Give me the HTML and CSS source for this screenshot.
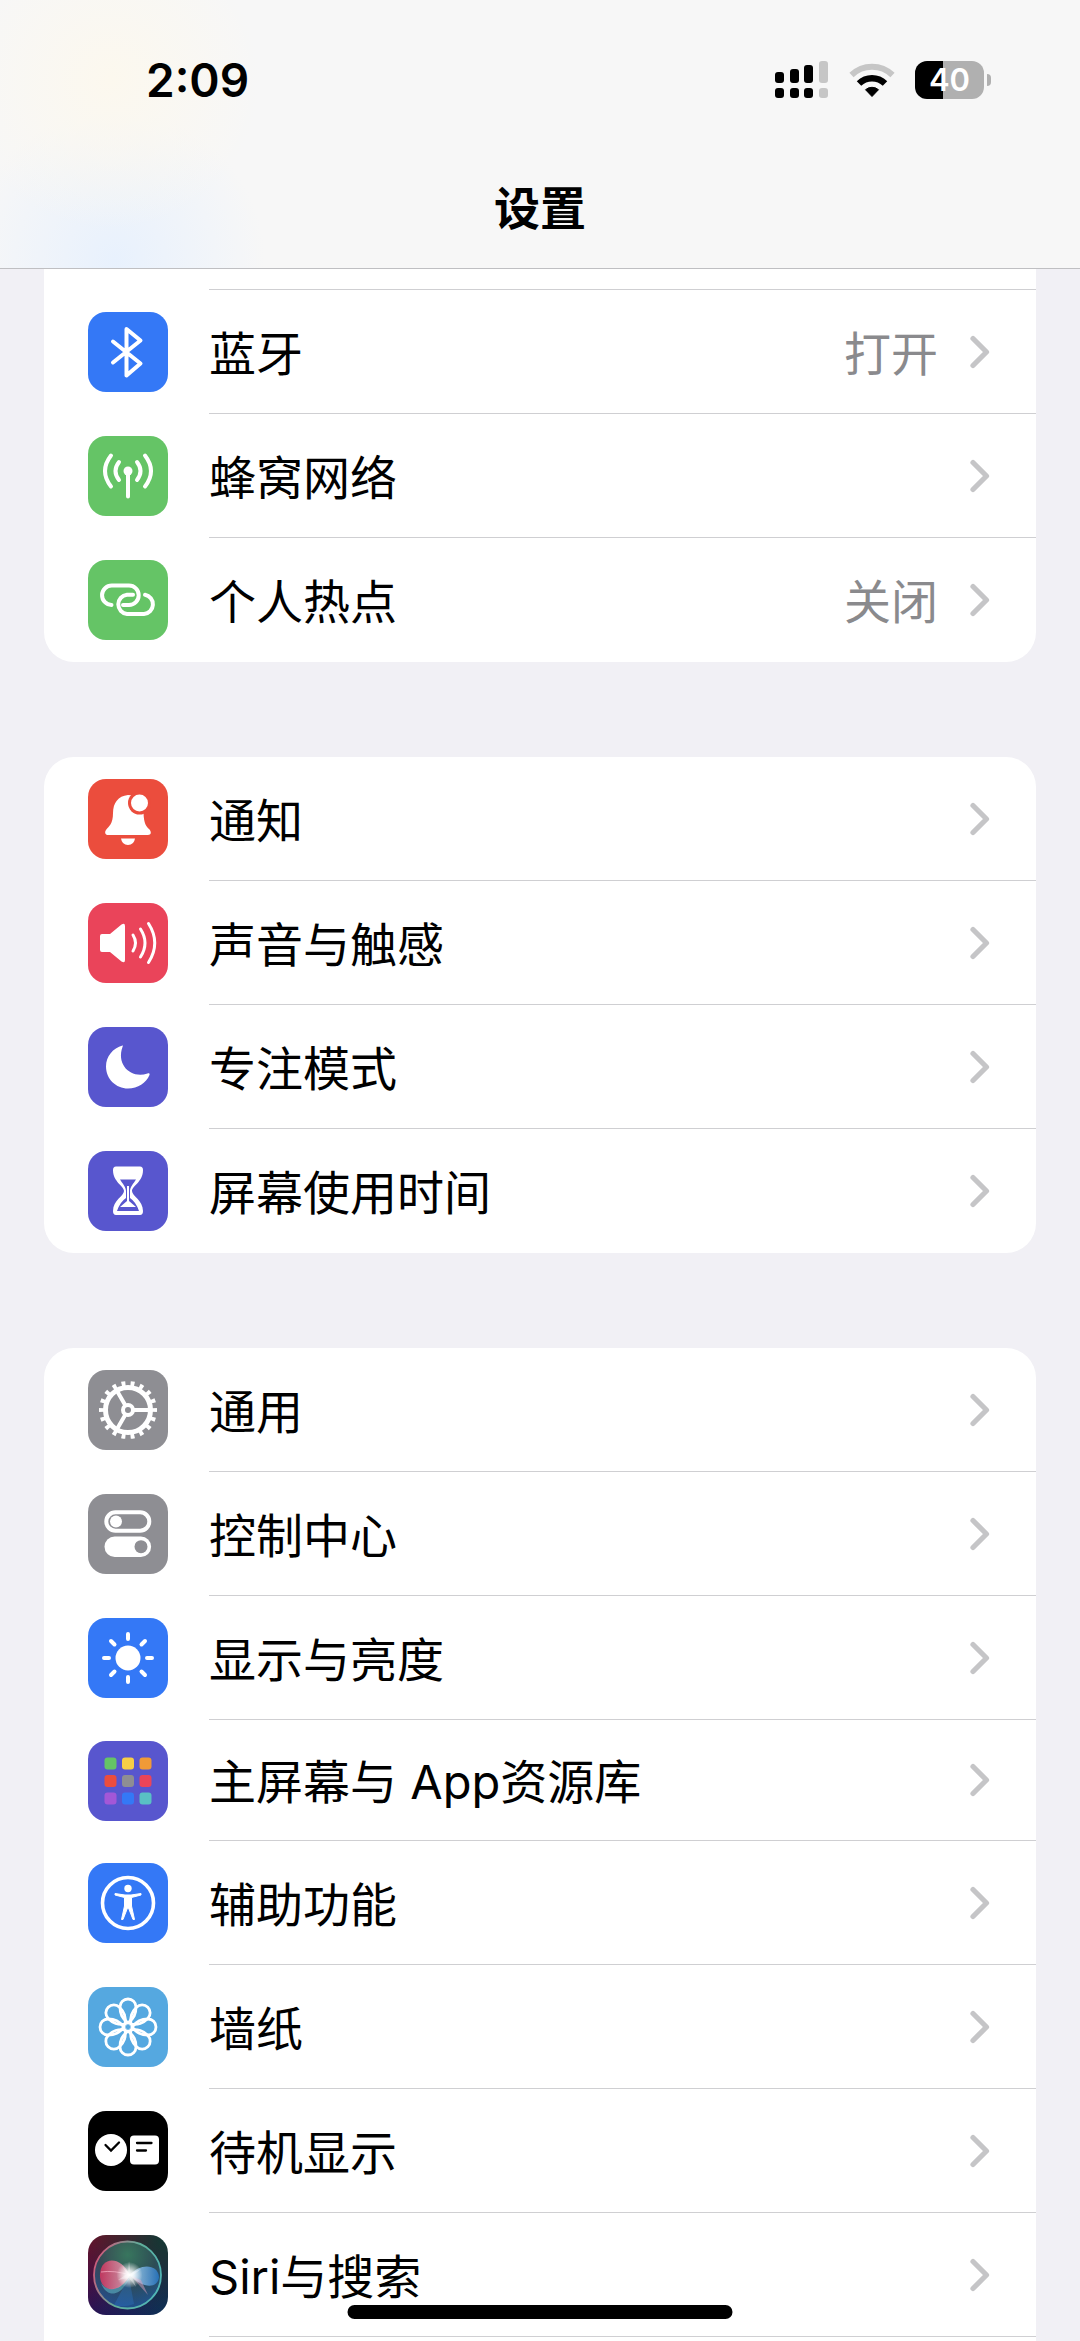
FILE: index.html
```html
<!DOCTYPE html>
<html lang="zh-CN">
<head>
  <meta charset="UTF-8" />
  <meta name="viewport" content="width=device-width, initial-scale=1.0" />
  <title>设置</title>
  <link rel="stylesheet" href="styles.css">
</head>
<body>
  <!-- shared chevron -->
  <svg class="defs" aria-hidden="true">
    <symbol id="chevron" viewBox="0 0 20 34">
      <path d="M3 3.5 L16.5 17 L3 30.5" fill="none" stroke="#c5c5c7" stroke-width="5.2" stroke-linecap="round" stroke-linejoin="round"/>
    </symbol>
  </svg>

  <header>
    <div class="status-bar">
      <time>2:09</time>
      <div class="status-icons">
        <svg width="54" height="38" viewBox="0 0 54 38" aria-label="信号">
          <g fill="#000">
            <rect x="0" y="11" width="9" height="11" rx="3"/>
            <rect x="15" y="8" width="9" height="14" rx="3"/>
            <rect x="29" y="4" width="9" height="18" rx="3"/>
            <rect x="0" y="27" width="9" height="10" rx="3"/>
            <rect x="15" y="27" width="9" height="10" rx="3"/>
            <rect x="29" y="27" width="9" height="10" rx="3"/>
          </g>
          <g fill="#c6c6c6">
            <rect x="44" y="0" width="9" height="22" rx="3"/>
            <rect x="44" y="27" width="9" height="10" rx="3"/>
          </g>
        </svg>
        <svg width="46" height="36" viewBox="0 0 46 36" aria-label="无线局域网">
          <path d="M2.5 13 A29.5 29.5 0 0 1 43.5 13" fill="none" stroke="#c6c6c6" stroke-width="6"/>
          <path d="M10 21.5 A19 19 0 0 1 36 21.5" fill="none" stroke="#000" stroke-width="6.5"/>
          <path d="M23 34.5 L16.5 27.7 A10 10 0 0 1 29.5 27.7Z" stroke="#000" stroke-linejoin="round"/>
        </svg>
        <div class="battery"><span>40</span></div>
      </div>
    </div>
    <h1>设置</h1>
  </header>

  <main>
    <ul class="group group-top">
      <li class="row-tail"></li>
      <li><a class="row" href="#bluetooth">
        <svg class="icon blue" viewBox="0 0 80 80"><path class="line" d="M25 29.5 L52.5 51.5 L38.5 63.5 V17 L52.5 28.5 L25 50.5"/></svg>
        <span class="cell"><span class="label">蓝牙</span><span class="value">打开</span><svg class="chevron"><use href="#chevron"/></svg></span>
      </a></li>
      <li><a class="row" href="#cellular">
        <svg class="icon green" viewBox="0 0 80 80">
          <circle cx="40" cy="35" r="4.5" fill="#fff"/>
          <path class="line" d="M40 36 V60.5 M23 19.5 Q11 35 23 50.5 M31 26 Q24 35 31 44 M57 19.5 Q69 35 57 50.5 M49 26 Q56 35 49 44"/>
        </svg>
        <span class="cell"><span class="label">蜂窝网络</span><svg class="chevron"><use href="#chevron"/></svg></span>
      </a></li>
      <li><a class="row" href="#hotspot">
        <svg class="icon green" viewBox="0 0 80 80"><path class="line" d="M23.5 45 A9.7 9.7 0 0 1 24 25.6 H41 A9.7 9.7 0 0 1 41 45 H35 M57 34.8 A9.7 9.7 0 0 1 56 54 H39 A9.7 9.7 0 0 1 39 34.7 H45"/></svg>
        <span class="cell"><span class="label">个人热点</span><span class="value">关闭</span><svg class="chevron"><use href="#chevron"/></svg></span>
      </a></li>
    </ul>

    <ul class="group">
      <li><a class="row" href="#notifications">
        <svg class="icon red" viewBox="0 0 80 80">
          <path fill="#fff" d="M40 16 C30 17 25 24 25 34 C25 45 21 47 18 51 C16 54 18 56 20 56 H60 C63 56 64 53 61 50 C58 47 56 45 55.5 34 C55 22 49 16 40 16Z M33 59.5 H47 Q46 66 40 66 Q34 66 33 59.5Z"/>
          <circle cx="51.5" cy="24" r="11.5" fill="#eb4d3d"/>
          <circle cx="51.5" cy="24" r="8.5" fill="#fff"/>
        </svg>
        <span class="cell"><span class="label">通知</span><svg class="chevron"><use href="#chevron"/></svg></span>
      </a></li>
      <li><a class="row" href="#sounds">
        <svg class="icon pink" viewBox="0 0 80 80">
          <path fill="#fff" d="M14 31 H22 L33.5 21.5 Q37 19.5 37 23 V57 Q37 60.5 33.5 58.5 L22 49 H14 Q12 49 12 47 V33 Q12 31 14 31Z"/>
          <path class="line thin" d="M45 32 Q50 40 45 48 M52.5 26 Q61.5 40 52.5 54 M60.5 20.5 Q73 40 60.5 59.5"/>
        </svg>
        <span class="cell"><span class="label">声音与触感</span><svg class="chevron"><use href="#chevron"/></svg></span>
      </a></li>
      <li><a class="row" href="#focus">
        <svg class="icon indigo" viewBox="0 0 80 80"><path fill="#fff" d="M34.5 18.5 C25 21 18 29.5 18 39.5 C18 52 28 61.5 40 61.5 C50 61.5 58 56 61.5 48 C62 46.5 61 46 59.5 46.5 C43 52 28 38 34.5 20 C35 18.8 35 18.3 34.5 18.5Z"/></svg>
        <span class="cell"><span class="label">专注模式</span><svg class="chevron"><use href="#chevron"/></svg></span>
      </a></li>
      <li><a class="row" href="#screen-time">
        <svg class="icon indigo" viewBox="0 0 80 80">
          <path fill="#fff" d="M28 15.500 H52 Q55 15.500 55 19 C55 31 44 35 44 40 C44 45 55 49 55 60 Q55 64 52 64 H28 Q25 64 25 60 C25 49 36 45 36 40 C36 35 25 31 25 19 Q25 15.500 28 15.500Z"/>
          <path fill="#5856ce" d="M32 28.500 H48 C46 32 42 36 42 40 V47 Q48 51 51 60 H29 Q32 51 38 47 V40 C38 36 34 32 32 28.500Z"/>
          <path fill="#fff" d="M39 35 H41 V50 L48 56 H32 L39 50Z"/>
        </svg>
        <span class="cell"><span class="label">屏幕使用时间</span><svg class="chevron"><use href="#chevron"/></svg></span>
      </a></li>
    </ul>

    <ul class="group group-open">
      <li><a class="row" href="#general">
        <svg class="icon gray" viewBox="0 0 80 80" fill="none" stroke="#fff">
          <circle cx="40" cy="40" r="22.5" stroke-width="5"/>
          <circle cx="40" cy="40" r="26.5" stroke-width="5" pathLength="18" stroke-dasharray="0.42 0.58" stroke-dashoffset="0.21"/>
          <circle cx="40" cy="40" r="5" stroke-width="4"/>
          <path stroke-width="4" d="M46 40 H61 M37 34.8 L29.5 21.8 M37 45.2 L29.5 58.2"/>
        </svg>
        <span class="cell"><span class="label">通用</span><svg class="chevron"><use href="#chevron"/></svg></span>
      </a></li>
      <li><a class="row" href="#control-center">
        <svg class="icon gray" viewBox="0 0 80 80">
          <rect x="18.3" y="18.3" width="43" height="18.4" rx="9.2" fill="none" stroke="#fff" stroke-width="4"/>
          <circle cx="28" cy="27.5" r="6" fill="#fff"/>
          <rect x="16.5" y="42.5" width="46.6" height="20.5" rx="10.2" fill="#fff"/>
          <circle cx="53" cy="52.7" r="6.5" fill="#8e8e93"/>
        </svg>
        <span class="cell"><span class="label">控制中心</span><svg class="chevron"><use href="#chevron"/></svg></span>
      </a></li>
      <li><a class="row" href="#display">
        <svg class="icon blue" viewBox="0 0 80 80">
          <circle cx="40" cy="40" r="12.5" fill="#fff"/>
          <path class="line" d="M40 16 V21 M40 59 V64 M16 40 H21 M59 40 H64 M23 23 L26.5 26.5 M53.5 53.5 L57 57 M57 23 L53.5 26.5 M26.5 53.5 L23 57"/>
        </svg>
        <span class="cell"><span class="label">显示与亮度</span><svg class="chevron"><use href="#chevron"/></svg></span>
      </a></li>
      <li><a class="row row-short" href="#home-screen">
        <svg class="icon indigo" viewBox="0 0 80 80">
          <rect x="16.5" y="16.5" width="12" height="12" rx="3" fill="#65c466"/>
          <rect x="34" y="16.5" width="12" height="12" rx="3" fill="#f7ce46"/>
          <rect x="51.5" y="16.5" width="12" height="12" rx="3" fill="#f09a37"/>
          <rect x="16.5" y="34" width="12" height="12" rx="3" fill="#eb4d3d"/>
          <rect x="34" y="34" width="12" height="12" rx="3" fill="#8e8e93"/>
          <rect x="51.5" y="34" width="12" height="12" rx="3" fill="#ea445a"/>
          <rect x="16.5" y="51.5" width="12" height="12" rx="3" fill="#a357d7"/>
          <rect x="34" y="51.5" width="12" height="12" rx="3" fill="#3478f6"/>
          <rect x="51.5" y="51.5" width="12" height="12" rx="3" fill="#59c0c4"/>
        </svg>
        <span class="cell"><span class="label">主屏幕与 App资源库</span><svg class="chevron"><use href="#chevron"/></svg></span>
      </a></li>
      <li><a class="row" href="#accessibility">
        <svg class="icon blue" viewBox="0 0 80 80">
          <circle cx="40" cy="40" r="25.5" fill="none" stroke="#fff" stroke-width="3.6"/>
          <circle cx="40" cy="25.5" r="3.7" fill="#fff"/>
          <path fill="#fff" stroke="#fff" stroke-linejoin="round" d="M27 30.5 L37 32 H43 L53 30.5 V32 L43.5 34.5 V43 L46.5 56.5 H45 L40.5 45 H39.5 L35 56.5 H33.500 L36.5 43 V34.5 L27 32Z"/>
        </svg>
        <span class="cell"><span class="label">辅助功能</span><svg class="chevron"><use href="#chevron"/></svg></span>
      </a></li>
      <li><a class="row" href="#wallpaper">
        <svg class="icon sky" viewBox="0 0 80 80" fill="none" stroke="#fff" stroke-width="2.8">
          <defs><path id="petal" d="M40 36 C34 31 32 27 32 20 A8 8 0 0 1 48 20 C48 27 46 31 40 36Z"/></defs>
          <use href="#petal"/>
          <use href="#petal" transform="rotate(45 40 40)"/>
          <use href="#petal" transform="rotate(90 40 40)"/>
          <use href="#petal" transform="rotate(135 40 40)"/>
          <use href="#petal" transform="rotate(180 40 40)"/>
          <use href="#petal" transform="rotate(225 40 40)"/>
          <use href="#petal" transform="rotate(270 40 40)"/>
          <use href="#petal" transform="rotate(315 40 40)"/>
          <circle cx="40" cy="40" r="4.5"/>
        </svg>
        <span class="cell"><span class="label">墙纸</span><svg class="chevron"><use href="#chevron"/></svg></span>
      </a></li>
      <li><a class="row" href="#standby">
        <svg class="icon black" viewBox="0 0 80 80">
          <circle cx="23" cy="39" r="16" fill="#fff"/>
          <rect x="42" y="24.5" width="29" height="29" rx="4" fill="#fff"/>
          <path d="M17.5 34 L23 39.5 L31 31.5 M49 32 H63.5 M49 39.5 H58" fill="none" stroke="#000" stroke-width="2.3" stroke-linecap="round"/>
        </svg>
        <span class="cell"><span class="label">待机显示</span><svg class="chevron"><use href="#chevron"/></svg></span>
      </a></li>
      <li><a class="row" href="#siri">
        <svg class="icon siri" viewBox="0 0 80 80">
          <defs>
            <radialGradient id="orb" cx="0.5" cy="0.2" r="0.85">
              <stop offset="0" stop-color="#3a8a68"/>
              <stop offset="0.5" stop-color="#31545c"/>
              <stop offset="1" stop-color="#1f5da8"/>
            </radialGradient>
            <linearGradient id="rim" x1="0" y1="0.3" x2="1" y2="0.7">
              <stop offset="0" stop-color="#d0587a"/>
              <stop offset="0.5" stop-color="#5fae9a"/>
              <stop offset="1" stop-color="#4fb6b8"/>
            </linearGradient>
            <linearGradient id="red-lobe" x1="0" x2="1">
              <stop offset="0" stop-color="#d8345f"/>
              <stop offset="1" stop-color="#e5b0c0"/>
            </linearGradient>
            <linearGradient id="blue-lobe" x1="0" x2="1">
              <stop offset="0" stop-color="#b8dcf4"/>
              <stop offset="1" stop-color="#2877c4"/>
            </linearGradient>
            <radialGradient id="glow">
              <stop offset="0" stop-color="#fff"/>
              <stop offset="0.35" stop-color="#fff" stop-opacity="0.8"/>
              <stop offset="1" stop-color="#fff" stop-opacity="0"/>
            </radialGradient>
          </defs>
          <circle cx="39.5" cy="40" r="33.5" fill="url(#orb)" fill-opacity="0.8" stroke="url(#rim)" stroke-width="1.8"/>
          <path d="M42 42 C32 64 18 62 13 48 C20 58 32 54 42 42Z" fill="#5eb3c4" opacity="0.6"/>
          <path d="M42 40 C32 20 13 22 12 39 C11 58 32 60 42 40Z" fill="url(#red-lobe)" opacity="0.85"/>
          <path d="M13 37 Q26 35 42 40" fill="none" stroke="#fbb6cc" opacity="0.7"/>
          <path d="M42 40 C52 28 70 29 71 42 C70 54 54 54 42 40Z" fill="url(#blue-lobe)" opacity="0.85"/>
          <path d="M43 41 L60 60 L53 45Z" fill="#d9a0bd" opacity="0.5"/>
          <path d="M41 42 L26 70 Q36 73 46 69Z" fill="#2f78c8" opacity="0.35"/>
          <circle cx="41.5" cy="40" r="13" fill="url(#glow)"/>
          <path d="M41 26 L42.5 38 L53 34 L44 41 L48 52 L41 43 L30 45 L39 39 L34 31 L40 37Z" fill="#fff" opacity="0.35"/>
        </svg>
        <span class="cell"><span class="label">Siri与搜索</span><svg class="chevron"><use href="#chevron"/></svg></span>
      </a></li>
      <li class="row-tail"></li>
    </ul>
  </main>

  <div class="home-indicator"></div>
</body>
</html>
```
FILE: styles.css
```css
* { margin: 0; padding: 0; box-sizing: border-box; }
body {
  height: 100vh; overflow: hidden; display: flex; flex-direction: column;
  background: #f1f0f5; color: #000;
  font-family: Inter, "Noto Sans CJK SC", sans-serif; font-size: 47px; line-height: 60px;
}
.defs { position: absolute; width: 0; height: 0; }

/* Header */
header {
  flex: none; padding: 50px 88px 30px; border-bottom: 1px solid #bfbfc2;
  background:
    radial-gradient(circle at 110px 80px, #fcf8ee 0, rgba(252,248,238,0) 150px),
    radial-gradient(circle at 115px 260px, #e8f1fd 0, rgba(232,241,253,0) 150px),
    #f7f7f7;
}
.status-bar { display: flex; justify-content: space-between; align-items: center; padding-left: 58px; }
.status-bar time { font-size: 46px; font-weight: 600; }
.status-icons { display: flex; align-items: center; gap: 20px; }
.battery {
  position: relative; width: 69px; height: 38px; margin-right: 8px; border-radius: 12px;
  background: linear-gradient(to right, #000 40%, #b0b0b0 40%);
  color: #fff; font-size: 31px; font-weight: 600; line-height: 38px; text-align: center;
}
.battery::after {
  content: ""; position: absolute; left: 72px; top: 13px; width: 4px; height: 12px;
  background: #b0b0b0; border-radius: 0 4px 4px 0;
}
h1 { margin-top: 68px; font-size: 46px; font-weight: 700; text-align: center; }

/* Settings list */
main { flex: 1; min-height: 0; overflow: hidden; padding: 0 44px; display: flex; flex-direction: column; gap: 95px; }
.group { flex: none; list-style: none; background: #fff; border-radius: 30px; overflow: hidden; }
.group-top { border-top-left-radius: 0; border-top-right-radius: 0; }
.group-open { border-bottom-left-radius: 0; border-bottom-right-radius: 0; }
.row { display: flex; height: 124px; padding-left: 44px; gap: 41px; align-items: center; color: inherit; text-decoration: none; }
.row-short { height: 121px; }
.cell { flex: 1; align-self: stretch; display: flex; align-items: center; padding-right: 46px; border-bottom: 1px solid #cfcfd2; }
.group li:last-child .cell { border-bottom: none; }
.row-tail { height: 21px; margin-left: 165px; border-bottom: 1px solid #cfcfd2; }
.label, .value { padding-top: 4px; }
.label { flex: 1; }
.value { color: #8a8a8d; margin-right: 32px; }
.chevron { flex: none; width: 20px; height: 34px; }

/* Icon tiles */
.icon { flex: none; width: 80px; height: 80px; border-radius: 18px; }
.line { fill: none; stroke: #fff; stroke-width: 4; stroke-linecap: round; stroke-linejoin: round; }
.thin { stroke-width: 3; }
.blue { background: #3478f6; }
.green { background: #65c466; }
.red { background: #eb4d3d; }
.pink { background: #ea445a; }
.indigo { background: #5856ce; }
.gray { background: #8e8e93; }
.sky { background: #55a8e0; }
.black { background: #000; }
.siri {
  background:
    radial-gradient(circle at 100% 0, #0e3a34 0, rgba(14,58,52,0) 75%),
    radial-gradient(circle at 100% 100%, #0d3158 0, rgba(13,49,88,0) 75%),
    linear-gradient(to bottom, #6b1228, #2a1055);
}

.home-indicator {
  position: fixed; bottom: 22px; left: 50%; width: 385px; height: 14px;
  background: #000; border-radius: 7px; transform: translateX(-50%);
}
```
